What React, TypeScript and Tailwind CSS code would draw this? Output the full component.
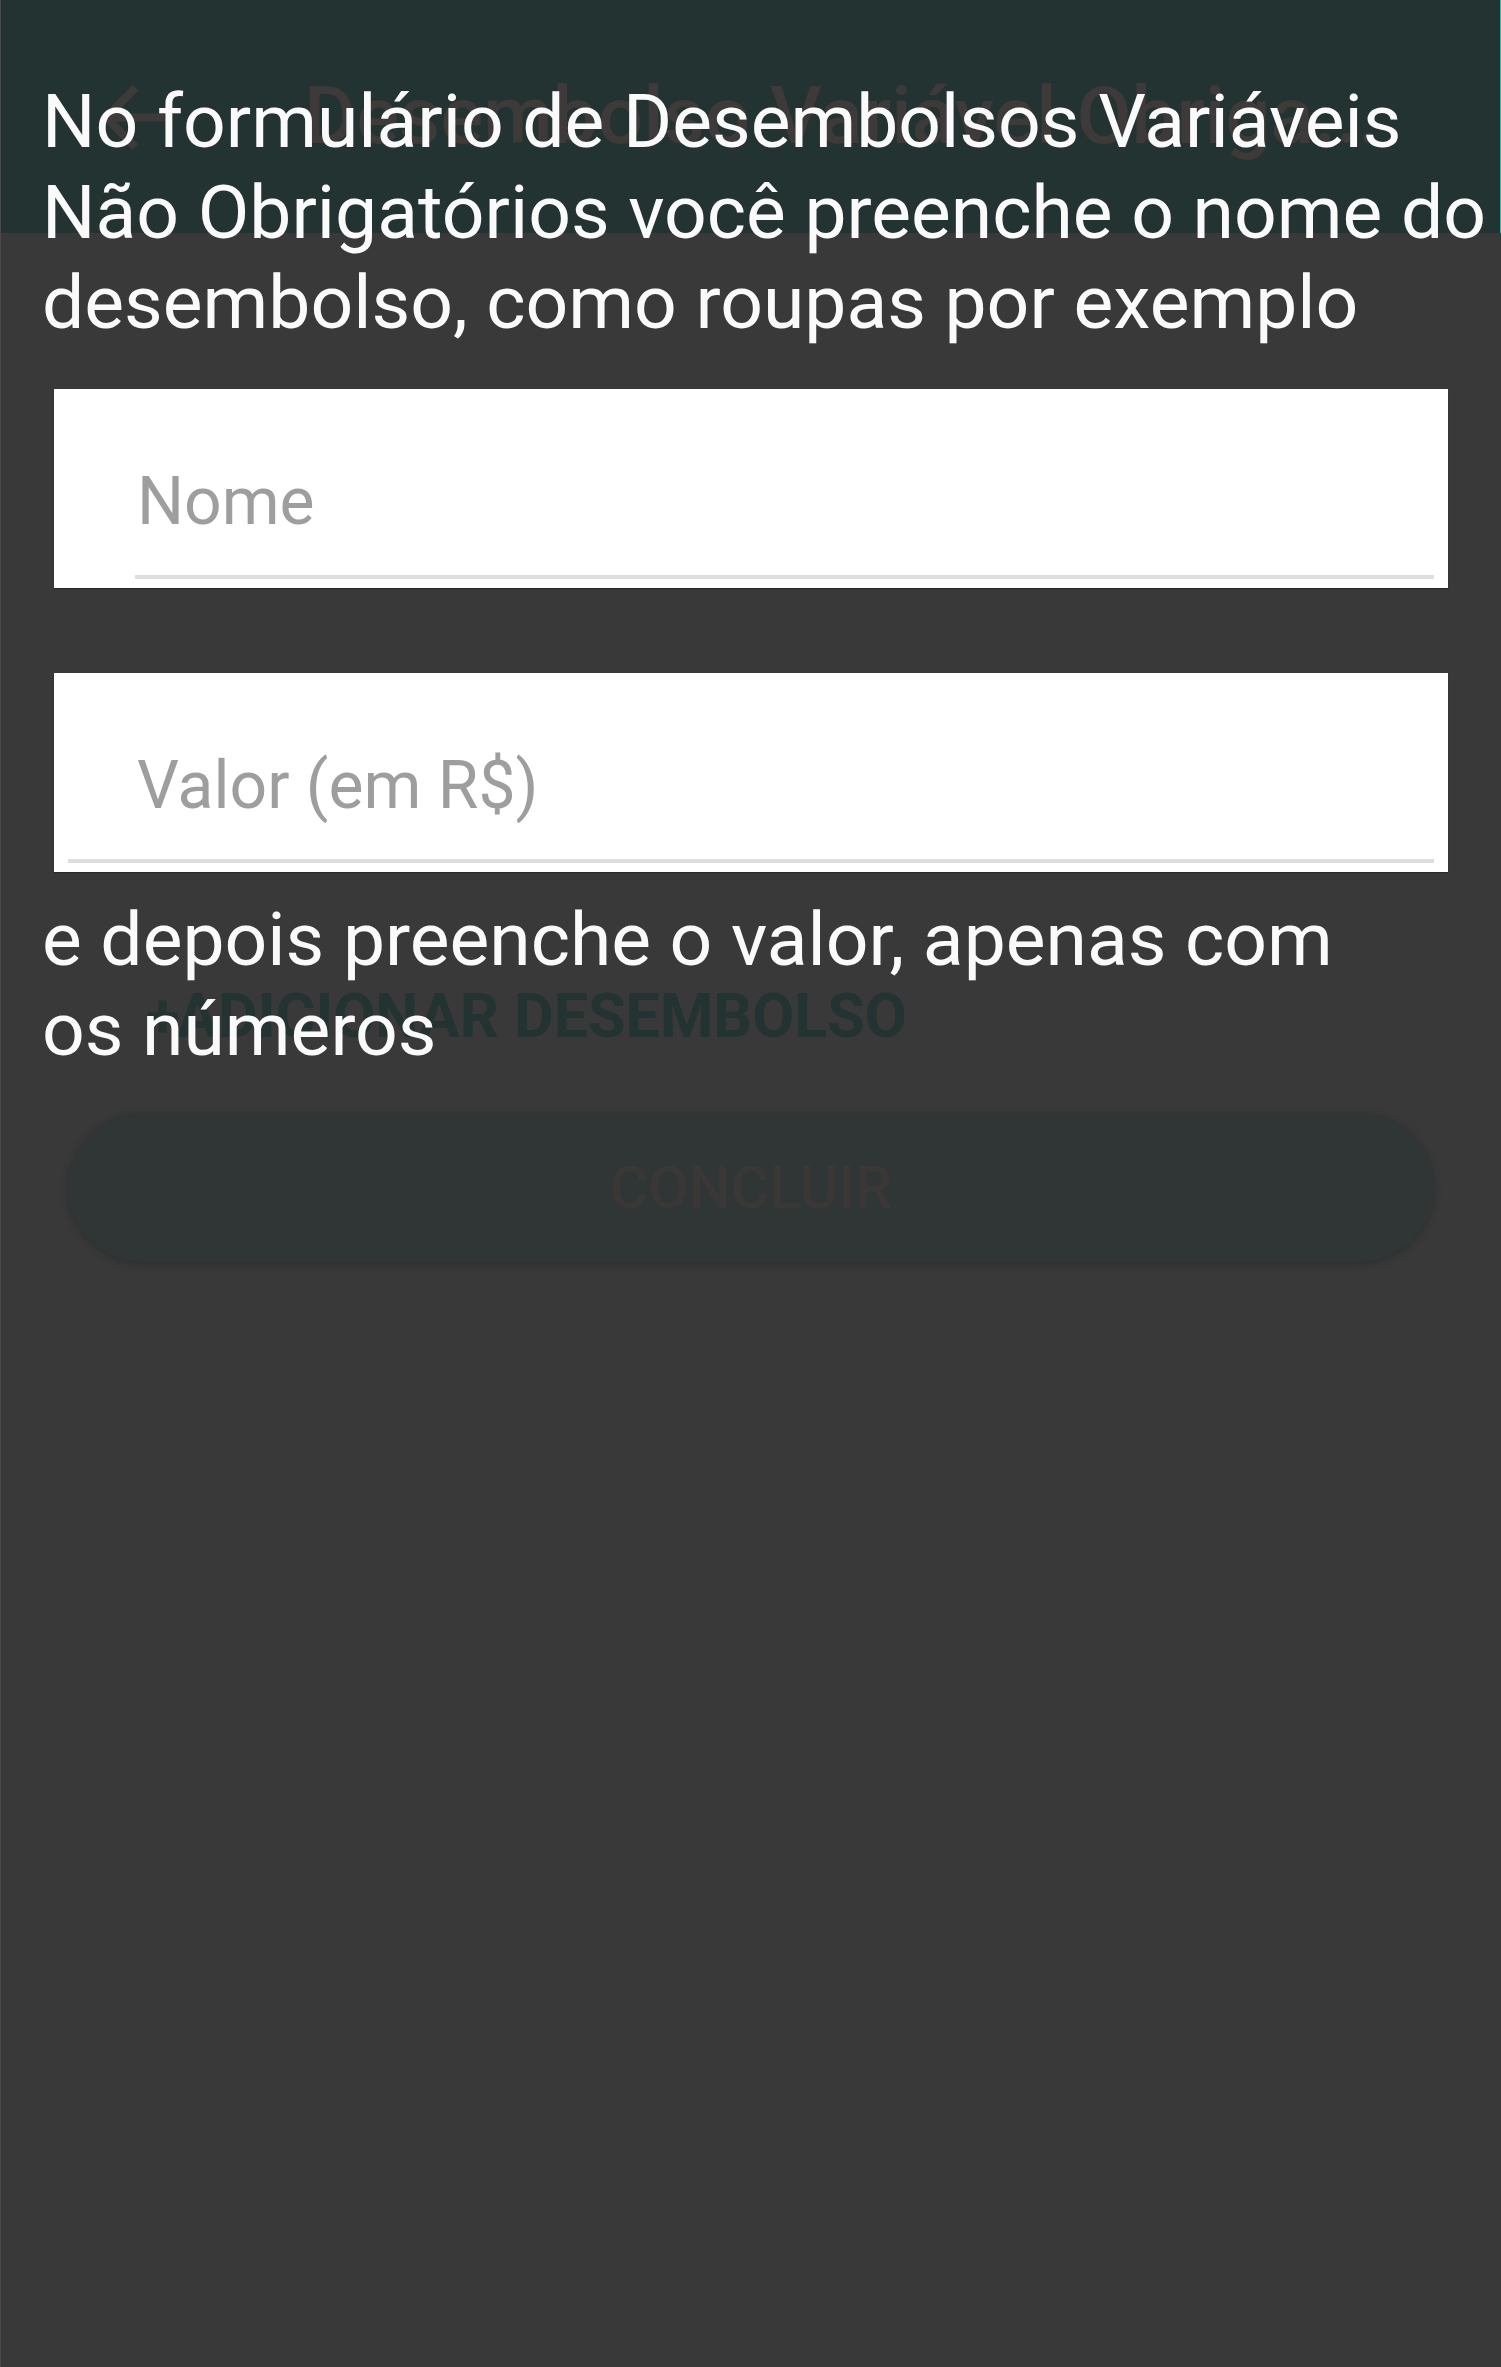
import React from 'react'

function BackArrow() {
  return (
    <svg viewBox="0 0 24 24" className="h-[97px] w-[97px]" fill="#3d3a39">
      <path d="M20 11H7.83l5.59-5.59L12 4l-8 8 8 8 1.41-1.41L7.83 13H20v-2z" />
    </svg>
  )
}

function Field({ label, lineClass }: { label: string; lineClass: string }) {
  return (
    <div className="bg-white h-[199px] flex flex-col shadow-[0_1px_1px_rgba(0,0,0,0.25)]">
      <div className="pt-[80px] pl-[83px] text-[66px] leading-none text-[#9e9e9e]">{label}</div>
      <div className={`mt-[40px] h-[4px] bg-[#dedede] ${lineClass}`} />
    </div>
  )
}

export default function App() {
  return (
    <div
      className="relative min-h-[2367px] w-full bg-[#393939] border-l border-[#4a4a4a]"
      style={{ fontFamily: 'Roboto, "Noto Sans", "Liberation Sans", sans-serif' }}
    >
      {/* app underneath the tutorial overlay */}
      <header className="h-[233px] bg-[#233331] border-r border-[#3fb8a8] flex items-start">
        <div className="ml-[83px] mt-[69px]">
          <BackArrow />
        </div>
        <h1 className="ml-[123px] mt-[76px] text-[80px] leading-none font-medium text-[#3d3a39] whitespace-nowrap">
          Desembolso Variável Obriga...
        </h1>
      </header>

      <main className="px-[53px] pt-[156px]">
        <Field label="Nome" lineClass="ml-[81px] mr-[14px]" />
        <div className="h-[85px]" />
        <Field label="Valor (em R$)" lineClass="mx-[14px]" />

        <div className="mt-[114px] flex items-center text-[61px] leading-none font-bold text-[#233331] pl-[92px]">
          <span className="w-[31px]">+</span>
          <span>ADICIONAR DESEMBOLSO</span>
        </div>

        <div className="mt-[66px] mx-[14px] h-[149px] rounded-full bg-[#303535] shadow-[0_2px_8px_rgba(0,0,0,0.2)] flex items-center justify-center">
          <span className="text-[59px] leading-none font-medium text-[#3a3737]">CONCLUIR</span>
        </div>
      </main>

      {/* tutorial overlay texts */}
      <p className="absolute left-[41px] top-[76px] w-[1458px] text-[75px] leading-[90.5px] text-[#fafafa]">
        No formulário de Desembolsos Variáveis Não Obrigatórios você preenche o nome do desembolso, como roupas por exemplo
      </p>
      <p className="absolute left-[41px] top-[894px] w-[1350px] text-[75px] leading-[90px] text-[#fafafa]">
        e depois preenche o valor, apenas com os números
      </p>
    </div>
  )
}
